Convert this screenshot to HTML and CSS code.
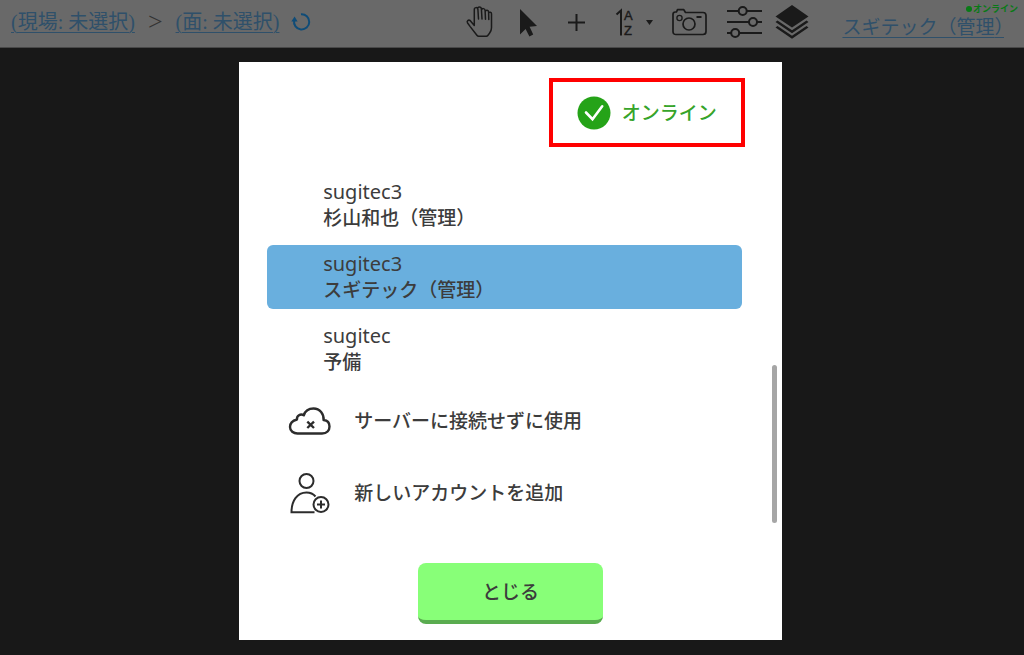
FILE: index.html
```html
<!DOCTYPE html>
<html lang="ja">
<head>
  <meta charset="UTF-8" />
  <meta name="viewport" content="width=device-width, initial-scale=1.0"/>
  <title>アカウント</title>
  <link rel="stylesheet" href="styles.css">
</head>
<body>

  <header class="topbar">
    <nav class="crumbs">
      <a href="#">(現場: 未選択)</a>
      <span class="sep">&gt;</span>
      <a href="#">(面: 未選択)</a>
      <button type="button" class="refresh" aria-label="更新">
        <svg width="20" height="20" viewBox="0 0 20 20" fill="none" stroke="currentColor" stroke-width="2">
          <path d="M10 2.3a7.6 7.6 0 1 1-6.8 6"/>
          <path d="M0.3 9.4L3.6 4.6L6.6 9.6Z" fill="currentColor" stroke="none"/>
        </svg>
      </button>
    </nav>

    <div class="tools">
      <div class="tool-group">
        <button type="button" aria-label="移動">
          <svg width="36" height="32" viewBox="0 0 36 32" fill="none" stroke="currentColor" stroke-width="1.5" stroke-linecap="round" stroke-linejoin="round">
            <path d="M10.3 18.5V3.6c0-2.6 3.4-2.600 3.600-.2l.6 9.600M13.600 3c0-2.600 3.600-2.600 3.800 0l.6 10M17.500 4c.4-2 3.400-1.800 3.600.4l.4 8.800M21.200 5.500c.6-1.800 3.300-1.600 3.400.5l.2 7.600M24.600 7c.8-1.400 2.900-1 2.900.8v14c0 2.200-.8 4-2 5.500l-1.700 2.200c-.4.6-.8.8-1.500.8h-7.600c-.8 0-1.300-.3-1.800-1L6.200 20.600 3.600 17c-1.300-2 .9-3.700 2.700-2.300l4 4.800"/>
          </svg>
        </button>
        <button type="button" aria-label="選択">
          <svg width="36" height="32" viewBox="0 0 36 32" fill="currentColor">
            <path d="M8 3V28.500L13.600 23L17.400 30.500L21.200 28.600L17.600 20.800L25 20Z"/>
          </svg>
        </button>
        <button type="button" aria-label="追加">
          <svg width="36" height="32" viewBox="0 0 36 32" fill="none" stroke="currentColor" stroke-width="2">
            <path d="M16.500 8v17M8 16.500h17"/>
          </svg>
        </button>
      </div>
      <div class="tool-group">
        <button type="button" aria-label="並べ替え">
          <svg width="40" height="32" viewBox="0 0 40 32">
            <path d="M2.500 8.500L7 4.500V29.500" fill="none" stroke="currentColor" stroke-width="2"/>
            <text class="sort-letter" x="10" y="14">A</text>
            <text class="sort-letter" x="10" y="29">Z</text>
            <path d="M32 14h7l-3.500 5z" fill="currentColor"/>
          </svg>
        </button>
      </div>
      <div class="tool-group">
        <button type="button" aria-label="写真">
          <svg width="36" height="32" viewBox="0 0 36 32" fill="none" stroke="currentColor" stroke-width="1.700" stroke-linejoin="round">
            <path d="M1 8.500c0-1.500.8-2.500 2.300-2.500H4.500l1-2.300h6.300l1.700 2.800H31c2 0 3 1 3 3V25.500c0 2-1 3-3 3H4c-2 0-3-1-3-3Z"/>
            <circle cx="17" cy="18" r="6"/>
            <circle cx="7.500" cy="12" r="2.600" stroke-width="1.300"/>
            <path d="M24.500 11h5" stroke-width="2"/>
          </svg>
        </button>
      </div>
      <div class="tool-group">
        <button type="button" aria-label="設定">
          <svg width="36" height="32" viewBox="0 0 36 32" fill="none" stroke="currentColor" stroke-width="2">
            <path d="M1 5h11.500M21 5h15M1 16h22M31 16h5M1 27h4M13.500 27H36"/>
            <circle cx="16.700" cy="5" r="4"/>
            <circle cx="27" cy="16" r="4"/>
            <circle cx="9.200" cy="27" r="4"/>
          </svg>
        </button>
        <button type="button" aria-label="レイヤー">
          <svg width="36" height="34" viewBox="0 0 36 34" fill="currentColor">
            <path d="M18 0L34.500 11.500L18 22.500L1.500 11.500Z"/>
            <path d="M3.500 15.500L18 25.300L32.500 15.500L34.500 17L18 28.200L1.500 17Z"/>
            <path d="M3.500 21L18 30.800L32.500 21L34.500 22.500L18 33.800L1.500 22.500Z"/>
          </svg>
        </button>
      </div>
    </div>

    <a href="#" class="user">スギテック（管理<span class="half">）</span></a>
    <span class="net-state"><i class="dot"></i>オンライン</span>
  </header>

  <main class="stage">
    <section class="dialog" role="dialog" aria-label="アカウント">
      <div class="status">
        <svg width="34" height="34" viewBox="0 0 34 34">
          <circle cx="17" cy="17" r="16.500" fill="#25a318"/>
          <path d="M9 16.500L15.500 23.200L25.200 10.300" fill="none" stroke="#fff" stroke-width="2.600" stroke-linecap="round"/>
        </svg>
        <span>オンライン</span>
      </div>

      <div class="list-wrap">
        <ul class="accounts">
          <li>
            <button type="button" class="row account">
              <span class="org">sugitec3</span>
              <span>杉山和也（管理）</span>
            </button>
          </li>
          <li>
            <button type="button" class="row account selected">
              <span class="org">sugitec3</span>
              <span>スギテック（管理）</span>
            </button>
          </li>
          <li>
            <button type="button" class="row account">
              <span class="org">sugitec</span>
              <span>予備</span>
            </button>
          </li>
          <li>
            <button type="button" class="row action">
              <svg width="44" height="44" viewBox="0 0 44 44" fill="none" stroke="currentColor" stroke-width="2.400" stroke-linejoin="round">
                <path d="M9.500 34.500H34C39 34.500 41.500 31.500 41.500 27.500C41.500 23.800 39.300 21.300 35.600 21C36 15 32 9.500 25.500 9.500C20.500 9.500 17 12.500 15.800 16.300C12.500 14.200 8.500 16.800 9 20.500C5 21.500 2 24 2 28C2 32 5.500 34.500 9.500 34.500Z"/>
                <path d="M19.300 22.700L26 29M26 22.700L19.300 29"/>
              </svg>
              <span>サーバーに接続せずに使用</span>
            </button>
          </li>
          <li>
            <button type="button" class="row action">
              <svg width="44" height="44" viewBox="0 0 44 44" fill="none" stroke="currentColor" stroke-width="2">
                <circle cx="18.500" cy="10" r="7"/>
                <path d="M27.500 25.500C25 22.500 22 21.500 18.500 21.500C9 21.500 3.500 30 3.500 41.300H26.500"/>
                <circle cx="33" cy="33.500" r="7.500"/>
                <path d="M33 29.500v8M29 33.500h8"/>
              </svg>
              <span>新しいアカウントを追加</span>
            </button>
          </li>
        </ul>
        <div class="thumb"></div>
      </div>

      <button type="button" class="close">とじる</button>
    </section>
  </main>

</body>
</html>
```

FILE: styles.css
```css
* {
  box-sizing: border-box;
  margin: 0;
  padding: 0;
}
body {
  min-height: 100vh;
  background: #181818;
  color: #3c3c3c;
  font-family: "Noto Sans", "Noto Sans CJK JP", sans-serif;
}
button {
  background: none;
  border: none;
  color: inherit;
  font: inherit;
  cursor: pointer;
}
svg {
  display: block;
}

/* top bar */
.topbar {
  position: relative;
  display: flex;
  align-items: center;
  height: 48px;
  padding: 0 20px 4px 11px;
  background: #696969;
  border-bottom: 1px solid #484848;
  font-family: "Liberation Serif", "Noto Sans CJK JP", serif;
  font-size: 20px;
  line-height: 24px;
  white-space: nowrap;
}
.topbar a {
  color: #2f506a;
  text-decoration: underline;
  text-decoration-thickness: 1px;
  text-underline-offset: 3px;
}
.crumbs {
  display: flex;
  align-items: center;
}
.sep {
  margin: 0 13px;
  color: #333;
  font-size: 26px;
}
.refresh {
  margin-left: 12px;
  color: #0f4c78;
}
.tools {
  display: flex;
  align-items: center;
  gap: 18px;
  margin-left: auto;
  color: #1a1a1a;
}
.tool-group {
  display: flex;
  align-items: center;
  gap: 12px;
}
.sort-letter {
  fill: currentColor;
  stroke: currentColor;
  stroke-width: 0.4px;
  font: 13px "Liberation Sans", Arial, sans-serif;
}
.user {
  margin-left: 32px;
  padding-top: 12px;
  font-size: 19px;
}
.half {
  font-feature-settings: "halt";
}
.net-state {
  position: absolute;
  top: 4px;
  right: 6px;
  display: flex;
  align-items: center;
  gap: 1px;
  color: #087a16;
  font: bold 9px/10px "Noto Sans CJK JP", sans-serif;
}
.dot {
  width: 6px;
  height: 6px;
  border-radius: 50%;
  background: #087a16;
}

/* dialog */
.stage {
  display: flex;
  justify-content: center;
  padding: 14px 3px 14px 0;
}
.dialog {
  display: flex;
  flex-direction: column;
  width: 53vw;
  min-width: 440px;
  padding: 16px 0;
  background: #fff;
  font-size: 19px;
  font-weight: 500;
  line-height: 26px;
}
.status {
  display: flex;
  align-items: center;
  align-self: flex-end;
  gap: 11px;
  height: 69px;
  margin-right: 37px;
  padding: 0 24px;
  border: 4px solid #f00;
  color: #36a42a;
}
.list-wrap {
  display: flex;
  align-items: flex-end;
  gap: 30px;
  margin-top: 26px;
  padding: 0 5px 0 28px;
}
.accounts {
  flex: 1;
  display: flex;
  flex-direction: column;
  gap: 8px;
  list-style: none;
}
.row {
  display: flex;
  width: 100%;
  height: 64px;
  border-radius: 6px;
  text-align: left;
}
.account {
  flex-direction: column;
  justify-content: center;
  padding-left: 56px;
}
.org {
  font-size: 20px;
  font-weight: 400;
}
.selected {
  background: #69afde;
}
.action {
  align-items: center;
  gap: 22px;
  padding-left: 21px;
}
.action svg {
  color: #2c2c2c;
}
.thumb {
  width: 5px;
  height: 158px;
  margin-bottom: 2px;
  border-radius: 3px;
  background: #a6a6a6;
}
.close {
  align-self: center;
  width: 185px;
  height: 61px;
  margin-top: 38px;
  border-bottom: 4px solid #5aac50;
  border-radius: 8px;
  background: #88ff78;
}
```
